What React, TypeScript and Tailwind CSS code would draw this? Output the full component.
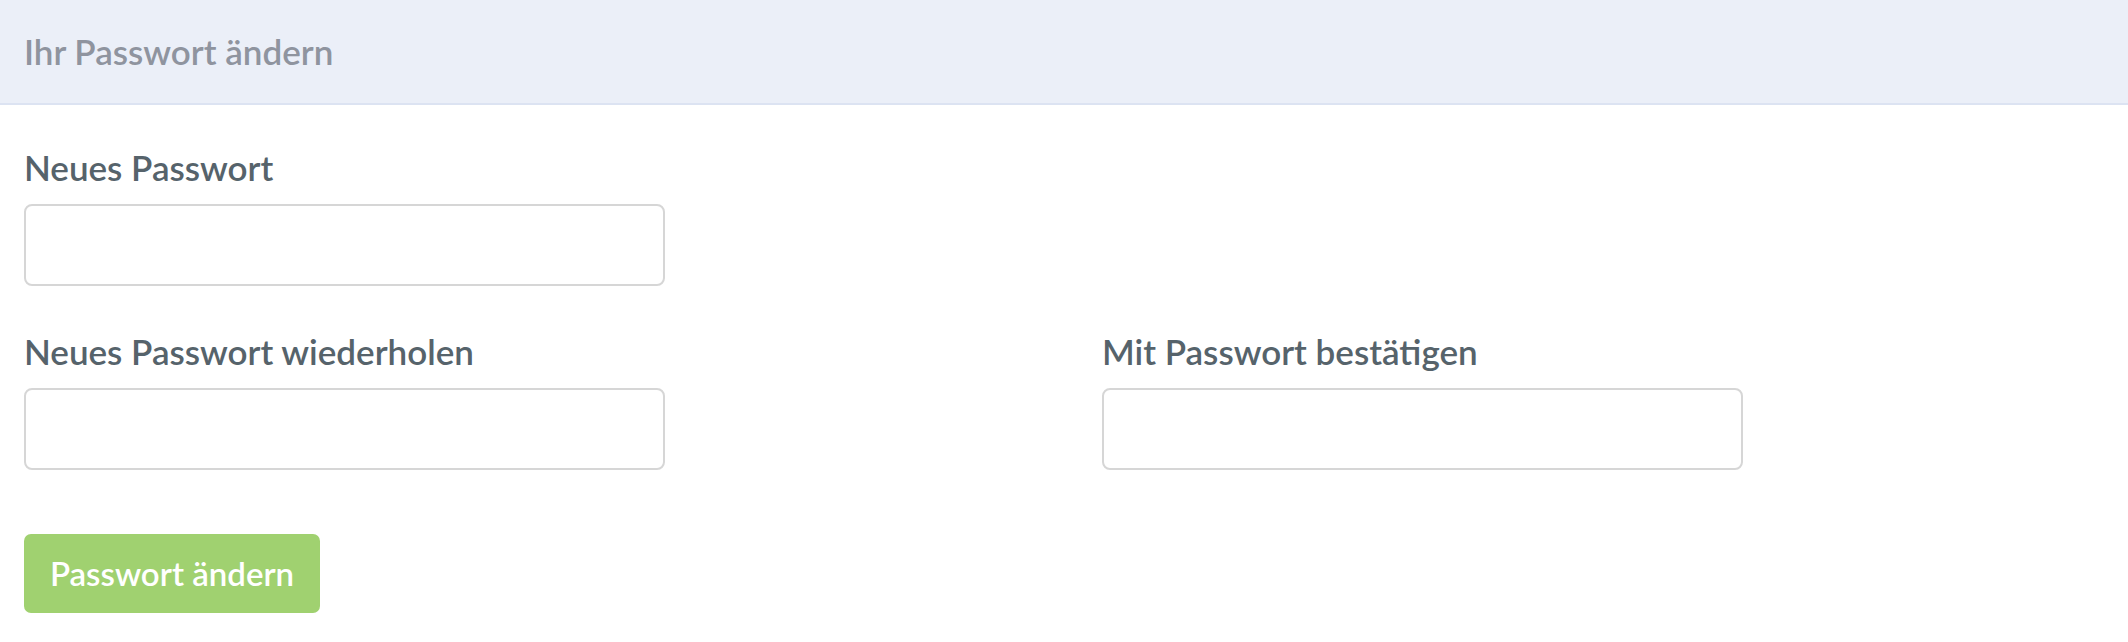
import React from "react";

export default function App() {
  const font = { fontFamily: "Lato, 'Noto Sans', sans-serif" };
  return (
    <div className="w-[2128px] h-[642px] bg-white overflow-hidden" style={font}>
      <div className="h-[105px] bg-[#ebeff8] border-b-2 border-[#dce3f2] flex items-center px-[24px]">
        <h1 className="text-[35px] font-semibold text-[#8f949f] leading-none">Ihr Passwort ändern</h1>
      </div>
      <div className="px-[24px] pt-[41px]">
        <div className="grid grid-cols-[1078px_1fr]">
          <div className="flex flex-col">
            <label className="text-[35px] font-semibold text-[#56636b] leading-[42px]">Neues Passwort</label>
            <input type="password" className="mt-[16px] w-[641px] h-[82px] rounded-[8px] border-2 border-[#d6d6d6] bg-white outline-none" />
          </div>
          <div />
        </div>
        <div className="grid grid-cols-[1078px_1fr] mt-[44px]">
          <div className="flex flex-col">
            <label className="text-[35px] font-semibold text-[#56636b] leading-[42px]">Neues Passwort wiederholen</label>
            <input type="password" className="mt-[16px] w-[641px] h-[82px] rounded-[8px] border-2 border-[#d6d6d6] bg-white outline-none" />
          </div>
          <div className="flex flex-col">
            <label className="text-[35px] font-semibold text-[#56636b] leading-[42px]">Mit Passwort bestätigen</label>
            <input type="password" className="mt-[16px] w-[641px] h-[82px] rounded-[8px] border-2 border-[#d6d6d6] bg-white outline-none" />
          </div>
        </div>
        <button className="mt-[64px] w-[296px] h-[79px] rounded-[7px] bg-[#a0d170] text-white text-[33px] font-semibold leading-none">
          Passwort ändern
        </button>
      </div>
    </div>
  );
}
